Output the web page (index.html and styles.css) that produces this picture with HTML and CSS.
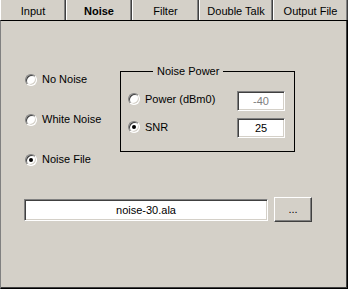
FILE: index.html
```html
<!DOCTYPE html>
<html lang="en">
<head>
  <meta charset="UTF-8" />
  <title>Noise</title>
  <link rel="stylesheet" href="styles.css">
</head>
<body>

  <div class="tabs">
    <div class="tab tab-input">Input</div>
    <div class="tab tab-noise active">Noise</div>
    <div class="tab tab-filter">Filter</div>
    <div class="tab tab-talk">Double Talk</div>
    <div class="tab tab-output">Output File</div>
  </div>

  <div class="panel">
    <div class="top-row">
      <div class="sources">
        <label class="option"><span class="radio"></span>No Noise</label>
        <label class="option"><span class="radio"></span>White Noise</label>
        <label class="option"><span class="radio checked"></span>Noise File</label>
      </div>

      <fieldset class="group">
        <legend>Noise Power</legend>
        <div class="power-grid">
          <label class="option"><span class="radio"></span>Power (dBm0)</label>
          <div class="field disabled">-40</div>
          <label class="option"><span class="radio checked"></span>SNR</label>
          <div class="field">25</div>
        </div>
      </fieldset>
    </div>

    <div class="file-row">
      <div class="field file-name">noise-30.ala</div>
      <button class="browse">...</button>
    </div>
  </div>

</body>
</html>
```

FILE: styles.css
```css
body {
  margin: 0;
  width: 348px;
  height: 289px;
  background: #d4d0c8;
  font-family: "Liberation Sans", Arial, sans-serif;
  font-size: 11px;
  color: #000;
  overflow: hidden;
}

/* tab strip */
.tabs {
  display: flex;
  height: 20px;
}
.tab {
  box-sizing: border-box;
  height: 20px;
  line-height: 20px;
  padding-top: 1px;
  text-align: center;
  border-left: 1px solid #fff;
  border-right: 1px solid #404040;
  box-shadow: inset -1px 0 #808080;
}
.tab.active {
  font-weight: bold;
}
.tab-input { width: 66px; }
.tab-noise { width: 66px; }
.tab-filter { width: 67px; }
.tab-talk { width: 74px; }
.tab-output { width: 75px; }

/* page body */
.panel {
  box-sizing: border-box;
  height: 269px;
  border-top: 1px solid #000;
  border-left: 1px solid #808080;
  border-right: 1px solid #000;
  border-bottom: 1px solid #000;
  box-shadow: inset -1px -1px #404040;
  padding: 44px 0 0 23px;
}

.top-row {
  display: flex;
  align-items: flex-start;
}

.sources {
  width: 96px;
  padding-top: 8px;
  display: flex;
  flex-direction: column;
  gap: 27px;
}
.sources .option {
  padding-left: 1px;
}

.option {
  display: flex;
  align-items: center;
  height: 13px;
  line-height: 13px;
  white-space: nowrap;
}

.radio {
  box-sizing: border-box;
  position: relative;
  width: 12px;
  height: 12px;
  margin-right: 5px;
  border-radius: 50%;
  background: #fff;
  border: 1px solid;
  border-color: #808080 #fff #fff #808080;
  box-shadow: inset 1px 1px #404040, inset -1px -1px #d4d0c8;
  flex: none;
}
.radio.checked::after {
  content: "";
  position: absolute;
  left: 3px;
  top: 3px;
  width: 4px;
  height: 4px;
  border-radius: 50%;
  background: #000;
}

/* group box */
.group {
  box-sizing: border-box;
  width: 175px;
  margin: 0;
  padding: 13px 9px 13px 7px;
  border: 1px solid #000;
}
.group legend {
  margin-left: 25px;
  padding: 0 4px;
  line-height: 13px;
}

.power-grid {
  display: grid;
  grid-template-columns: 1fr 48px;
  grid-auto-rows: 20px;
  row-gap: 7px;
  align-items: center;
}
.power-grid .option {
  margin-top: -4px;
}
.power-grid .option:nth-of-type(2) {
  margin-top: -2px;
}

/* sunken edit boxes */
.field {
  box-sizing: border-box;
  height: 20px;
  line-height: 18px;
  text-align: center;
  background: #fff;
  border: 1px solid;
  border-color: #808080 #fff #fff #808080;
  box-shadow: inset 1px 1px #404040, inset -1px -1px #d4d0c8;
}
.field.disabled {
  color: #808080;
}

.file-row {
  display: flex;
  align-items: center;
  margin-top: 31px;
}
.file-name {
  width: 244px;
  height: 22px;
  line-height: 20px;
  margin-right: 6px;
}

.browse {
  box-sizing: border-box;
  width: 38px;
  height: 25px;
  padding: 0 0 2px;
  font: inherit;
  color: #000;
  background: #d4d0c8;
  border: 1px solid;
  border-color: #fff #404040 #404040 #fff;
  box-shadow: inset -1px -1px #808080;
}
```
